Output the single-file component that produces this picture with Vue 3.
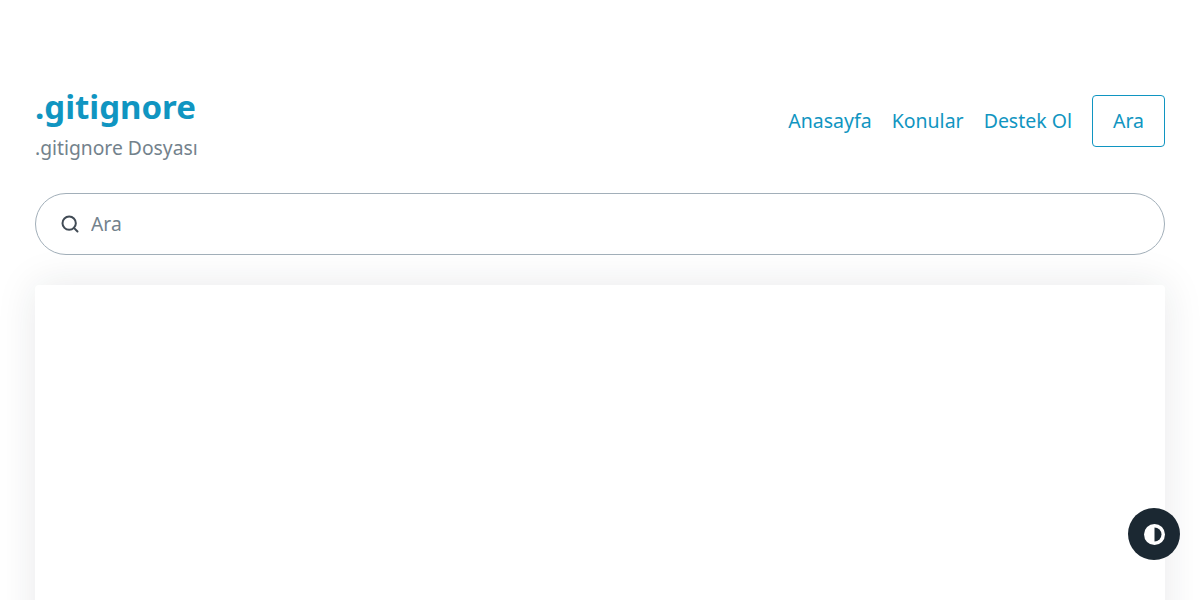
<script setup>
const links = ['Anasayfa', 'Konular', 'Destek Ol']
</script>

<template>
  <div class="page">
    <header class="head">
      <div class="brand">
        <h1>.gitignore</h1>
        <p>.gitignore Dosyası</p>
      </div>
      <nav class="nav">
        <a v-for="link in links" :key="link" href="#">{{ link }}</a>
        <a class="search-btn" href="#">Ara</a>
      </nav>
    </header>
    <div class="search">
      <svg width="20" height="20" viewBox="0 0 24 24" fill="none" stroke="#414b55" stroke-width="2.4" stroke-linecap="round" stroke-linejoin="round">
        <circle cx="11" cy="11" r="8" />
        <line x1="21" y1="21" x2="16.65" y2="16.65" />
      </svg>
      <input type="text" placeholder="Ara" />
    </div>
    <main class="card"></main>
    <button class="theme" aria-label="Tema">
      <svg width="21" height="21" viewBox="0 0 21 21">
        <circle cx="10.5" cy="10.5" r="10.5" fill="#fff" />
        <path d="M10.5 3.5a7 7 0 0 1 0 14z" fill="#1b2832" />
      </svg>
    </button>
  </div>
</template>

<style>
html, body {
  background: #fff;
  overflow: hidden;
}
</style>

<style scoped>
.page {
  height: 600px;
  box-sizing: border-box;
  padding: 85px 35px 0;
  font-family: "Noto Sans", "Open Sans", sans-serif;
  overflow: hidden;
}
.head {
  display: flex;
  justify-content: space-between;
  align-items: flex-start;
  margin-bottom: 26px;
}
.brand h1 {
  margin: 0;
  font-size: 33px;
  line-height: 44px;
  font-weight: 700;
  color: #1095c1;
}
.brand p {
  margin: 0;
  font-size: 19.3px;
  line-height: 38px;
  color: #73828c;
}
.nav {
  display: flex;
  align-items: center;
  gap: 20px;
  margin-top: 10px;
}
.nav a {
  padding-bottom: 2px;
  font-size: 19.5px;
  color: #1095c1;
  text-decoration: none;
}
.nav .search-btn {
  box-sizing: border-box;
  width: 73px;
  height: 52px;
  display: flex;
  align-items: center;
  justify-content: center;
  border: 1px solid #1095c1;
  border-radius: 4px;
}
.search {
  box-sizing: border-box;
  height: 62px;
  display: flex;
  align-items: center;
  gap: 11px;
  padding: 0 24px;
  border: 1px solid #a2afb9;
  border-radius: 31px;
  background: #fff;
}
.search svg {
  flex: none;
}
.search input {
  flex: 1;
  padding: 0 0 2px;
  border: none;
  outline: none;
  background: transparent;
  font: inherit;
  font-size: 19.3px;
}
.search input::placeholder {
  color: #73828c;
  opacity: 1;
}
.card {
  height: 400px;
  margin-top: 30px;
  background: #fff;
  border-radius: 4px;
  box-shadow: 0 0 40px rgba(27, 40, 50, 0.1);
}
.theme {
  position: fixed;
  right: 20px;
  bottom: 40px;
  width: 52px;
  height: 52px;
  display: flex;
  align-items: center;
  justify-content: center;
  padding: 0;
  border: none;
  border-radius: 50%;
  background: #1b2832;
}
</style>
